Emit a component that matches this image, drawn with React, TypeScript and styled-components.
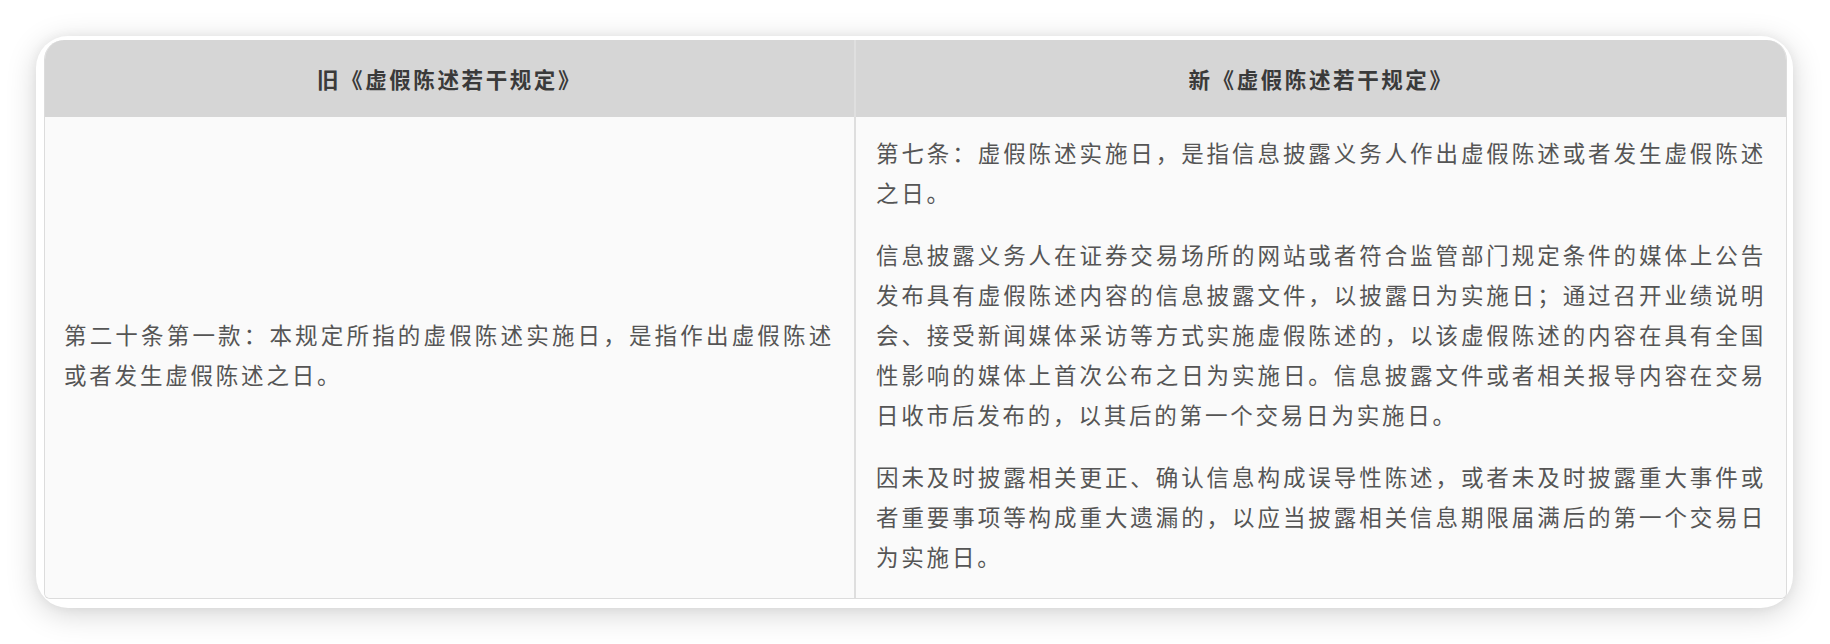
import React from "react";
import styled, { createGlobalStyle } from "styled-components";

const Global = createGlobalStyle`
  html, body { margin: 0; padding: 0; background: #ffffff; }
  body { font-family: "Noto Sans CJK SC", "Noto Sans", sans-serif; }
  * { box-sizing: border-box; }
`;

const Page = styled.div`
  padding: 36px;
  width: 1830px;
  height: 644px;
`;

const Card = styled.div`
  width: 1757px;
  background: #ffffff;
  border-radius: 32px;
  padding: 4px 6px 9px 8px;
  box-shadow: 0 6px 30px rgba(0, 0, 0, 0.17), 0 0 12px rgba(0, 0, 0, 0.05);
`;

const Table = styled.div`
  display: grid;
  grid-template-columns: 809px 1fr;
  border: 1px solid #dcdcdc;
  border-top: none;
  border-radius: 20px 20px 6px 6px;
  overflow: hidden;
  background: #fafafa;
`;

const HeadCell = styled.div<{ $divider?: boolean }>`
  height: 77px;
  background: #d6d6d6;
  display: flex;
  align-items: center;
  justify-content: center;
  font-size: 21.5px;
  font-weight: 700;
  letter-spacing: 2.6px;
  color: #3a3a3a;
  border-left: ${(p) => (p.$divider ? "2px solid #dfdfdf" : "none")};
`;

const BodyCell = styled.div<{ $divider?: boolean; $center?: boolean }>`
  background: #fafafa;
  padding: 15px 20px 22px;
  display: flex;
  flex-direction: column;
  justify-content: ${(p) => (p.$center ? "center" : "flex-start")};
  border-left: ${(p) => (p.$divider ? "2px solid #dedede" : "none")};
  padding-left: ${(p) => (p.$divider ? "20px" : "19px")};
`;

const Para = styled.p`
  margin: 0 0 22px;
  font-size: 22.5px;
  line-height: 40px;
  letter-spacing: 2.8px;
  color: #555555;
  text-align: justify;
  &:last-child { margin-bottom: 0; }
`;

export default function App() {
  return (
    <>
      <Global />
      <Page>
        <Card>
          <Table>
            <HeadCell>旧《虚假陈述若干规定》</HeadCell>
            <HeadCell $divider>新《虚假陈述若干规定》</HeadCell>
            <BodyCell $center>
              <Para>第二十条第一款：本规定所指的虚假陈述实施日，是指作出虚假陈述或者发生虚假陈述之日。</Para>
            </BodyCell>
            <BodyCell $divider>
              <Para>第七条：虚假陈述实施日，是指信息披露义务人作出虚假陈述或者发生虚假陈述之日。</Para>
              <Para>
                信息披露义务人在证券交易场所的网站或者符合监管部门规定条件的媒体上公告发布具有虚假陈述内容的信息披露文件，以披露日为实施日；通过召开业绩说明会、接受新闻媒体采访等方式实施虚假陈述的，以该虚假陈述的内容在具有全国性影响的媒体上首次公布之日为实施日。信息披露文件或者相关报导内容在交易日收市后发布的，以其后的第一个交易日为实施日。
              </Para>
              <Para>
                因未及时披露相关更正、确认信息构成误导性陈述，或者未及时披露重大事件或者重要事项等构成重大遗漏的，以应当披露相关信息期限届满后的第一个交易日为实施日。
              </Para>
            </BodyCell>
          </Table>
        </Card>
      </Page>
    </>
  );
}
